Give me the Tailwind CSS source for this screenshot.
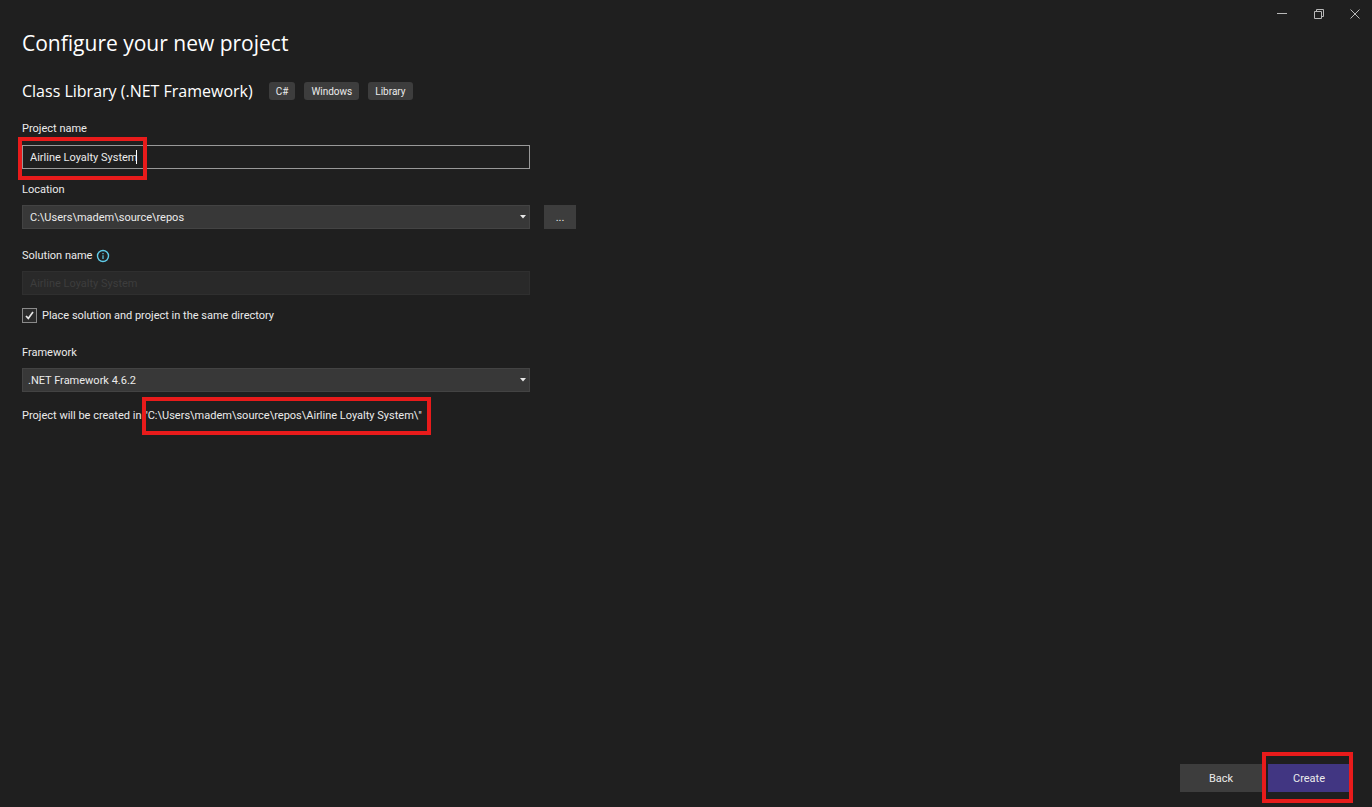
<!DOCTYPE html>
<html lang="en">
<head>
    <meta charset="UTF-8">
    <meta name="viewport" content="width=device-width, initial-scale=1.0">
    <title>Configure your new project</title>
    <script src="https://cdn.jsdelivr.net/npm/@tailwindcss/browser@4"></script>
</head>
<body class="min-h-screen flex flex-col bg-[#1f1f1f] text-[#ebebeb] text-[11px] leading-[18px] font-[Roboto,sans-serif]">
    <!-- Window buttons -->
    <header class="h-7 flex justify-end text-[#b8b8b8]">
        <button aria-label="Minimize" class="w-[37px] flex items-center justify-center">
            <svg class="w-[10px] h-[10px]" viewBox="0 0 10 10" stroke="currentColor" fill="none"><path d="M0 4.5h10"/></svg>
        </button>
        <button aria-label="Restore" class="w-[37px] flex items-center justify-center">
            <svg class="w-[10px] h-[10px]" viewBox="0 0 10 10" stroke="currentColor" fill="none"><path d="M.5 2.5h7v7h-7zM2.5 2.5v-2h7v7h-2"/></svg>
        </button>
        <button aria-label="Close" class="w-[35px] flex items-center justify-center">
            <svg class="w-[10px] h-[10px]" viewBox="0 0 10 10" stroke="currentColor" fill="none"><path d="M.5.5l9 9M9.5.5l-9 9"/></svg>
        </button>
    </header>

    <main class="grow px-[22px]">
        <h1 class="text-[21px] leading-[30px] text-white font-['Open_Sans',sans-serif]">Configure your new project</h1>

        <div class="mt-5 h-[26px] flex items-center">
            <h2 class="text-[16px] leading-[26px] text-white mr-4 font-['Open_Sans',sans-serif]">Class Library (.NET Framework)</h2>
            <ul class="flex gap-[9px] text-[10px]">
                <li class="h-[18px] px-[7px] rounded-[3px] bg-[#3d3d3d] leading-5">C#</li>
                <li class="h-[18px] px-[7px] rounded-[3px] bg-[#3d3d3d] leading-5">Windows</li>
                <li class="h-[18px] px-[7px] rounded-[3px] bg-[#3d3d3d] leading-5">Library</li>
            </ul>
        </div>

        <form id="project" class="mt-4 max-w-[508px]">
            <label for="name" class="block">Project name</label>
            <div class="relative mt-[7px]">
                <input id="name" type="text" value="Airline Loyalty System" class="block w-full h-6 px-[7px] border border-[#999999] outline-none">
                <span class="absolute left-[114px] top-[5px] w-px h-[14px] bg-white"></span>
                <div class="absolute -left-1 -top-2 w-[129px] h-[43px] border-4 border-[#e81b1b]"></div>
            </div>

            <label for="location" class="block mt-3">Location</label>
            <div class="relative mt-[6px]">
                <select id="location" class="appearance-none block w-full h-6 pt-[2px] px-[7px] border border-[#434343] bg-[#383838]">
                    <option>C:\Users\madem\source\repos</option>
                </select>
                <svg class="absolute right-1 top-[10px] w-[6px] h-1 pointer-events-none" viewBox="0 0 6 4" fill="#e8e8e8"><path d="M0 0h6L3 3.5z"/></svg>
                <button type="button" class="absolute left-full top-0 ml-[14px] w-8 h-6 pt-[2px] bg-[#3d3d3d]">...</button>
            </div>

            <div class="mt-[18px] flex items-center gap-[5px]">
                <label for="solution">Solution name</label>
                <svg class="w-3 h-3 overflow-visible" viewBox="0 0 12 12" fill="none" stroke="#5fcbe8"><circle cx="6" cy="6" r="5.5" stroke-width="1.4"/><path d="M6 5.2v3.8M6 3v1.2" stroke-width="1.2"/></svg>
            </div>
            <input id="solution" type="text" value="Airline Loyalty System" disabled class="block mt-[6px] w-full h-6 px-[7px] border border-[#2f2f2f] bg-[#292929] text-[#3d3d3d]">

            <label class="mt-3 flex gap-[5px]">
                <span class="relative mt-px w-[15px] h-[15px]">
                    <input type="checkbox" checked class="appearance-none block w-full h-full border border-[#8a8a8a] bg-[#2b2b2b]">
                    <svg class="absolute left-[3px] top-[3px] w-[9px] h-[9px] pointer-events-none" viewBox="0 0 9 9" fill="none" stroke="#e8e8e8" stroke-width="1.7"><path d="M1 5l2.3 2.4L8 1"/></svg>
                </span>
                <span>Place solution and project in the same directory</span>
            </label>

            <label for="framework" class="block mt-[19px]">Framework</label>
            <div class="relative mt-[6px]">
                <select id="framework" class="appearance-none block w-full h-6 pt-[2px] px-[5px] border border-[#434343] bg-[#383838]">
                    <option>.NET Framework 4.6.2</option>
                </select>
                <svg class="absolute right-1 top-[10px] w-[6px] h-1 pointer-events-none" viewBox="0 0 6 4" fill="#e8e8e8"><path d="M0 0h6L3 3.5z"/></svg>
            </div>

            <div class="relative mt-[15px]">
                <p>Project will be created in "C:\Users\madem\source\repos\Airline Loyalty System\"</p>
                <div class="absolute left-[120px] -top-[10px] w-[289px] h-[38px] border-4 border-[#e81b1b]"></div>
            </div>
        </form>
    </main>

    <footer class="flex justify-end gap-[6px] pr-[22px] pb-[15px]">
        <button type="button" class="w-[82px] h-7 pt-[2px] bg-[#3d3d3d]">Back</button>
        <div class="relative">
            <button type="submit" form="project" class="block w-[82px] h-7 pt-[2px] bg-[#413682]">Create</button>
            <div class="absolute -left-[6px] -top-3 w-[91px] h-[51px] border-4 border-[#e81b1b]"></div>
        </div>
    </footer>
</body>
</html>
